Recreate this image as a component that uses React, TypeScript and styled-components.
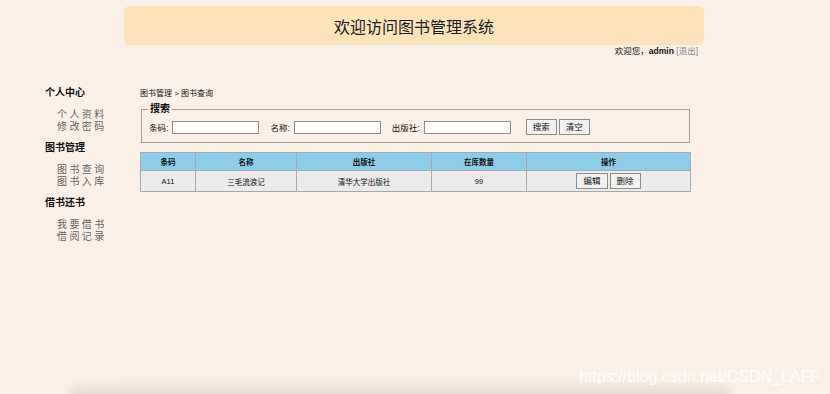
import React from "react";
import styled, { createGlobalStyle } from "styled-components";

const GlobalStyle = createGlobalStyle`
  html, body {
    margin: 0;
    padding: 0;
    background: #faf0e7;
    font-family: "Liberation Sans", "Noto Sans CJK SC", sans-serif;
    color: #111;
  }
`;

const menus = [
  { title: "个人中心", items: ["个人资料", "修改密码"] },
  { title: "图书管理", items: ["图书查询", "图书入库"] },
  { title: "借书还书", items: ["我要借书", "借阅记录"] },
];

const books = [{ code: "A11", name: "三毛流浪记", press: "清华大学出版社", stock: 99 }];

const App = () => {
  return (
    <>
      <GlobalStyle />
      <SPage>
        <SHeader>
          <SBanner>欢迎访问图书管理系统</SBanner>
          <SUser>
            欢迎您，<b>admin</b> <SLogout>[退出]</SLogout>
          </SUser>
        </SHeader>
        <SBody>
          <SSide>
            {menus.map((m) => (
              <SMenu key={m.title}>
                <SMenuTitle>{m.title}</SMenuTitle>
                <SSubList>
                  {m.items.map((it) => (
                    <SSubItem key={it}>{it}</SSubItem>
                  ))}
                </SSubList>
              </SMenu>
            ))}
          </SSide>
          <SMain>
            <SCrumb>图书管理 &gt; 图书查询</SCrumb>
            <SFieldset>
              <SLegend>搜索</SLegend>
              <SField>
                条码:<SInput />
              </SField>
              <SField>
                名称:<SInput />
              </SField>
              <SField>
                出版社:<SInput />
              </SField>
              <SButtons>
                <SButton>搜索</SButton>
                <SButton>清空</SButton>
              </SButtons>
            </SFieldset>
            <STable>
              <thead>
                <tr>
                  <STh $w={55}>条码</STh>
                  <STh $w={101}>名称</STh>
                  <STh $w={135}>出版社</STh>
                  <STh $w={95}>在库数量</STh>
                  <STh>操作</STh>
                </tr>
              </thead>
              <tbody>
                {books.map((b) => (
                  <tr key={b.code}>
                    <STd>{b.code}</STd>
                    <STd>{b.name}</STd>
                    <STd>{b.press}</STd>
                    <STd>{b.stock}</STd>
                    <STd>
                      <SOps>
                        <SButton>编辑</SButton>
                        <SButton>删除</SButton>
                      </SOps>
                    </STd>
                  </tr>
                ))}
              </tbody>
            </STable>
          </SMain>
        </SBody>
        <SShadow />
        <SMark>https://blog.csdn.net/CSDN_LAFF</SMark>
      </SPage>
    </>
  );
};

const SPage = styled.div`
  position: relative;
  width: 830px;
  height: 394px;
  overflow: hidden;
`;
const SHeader = styled.header`
  width: 580px;
  margin: 0 0 0 124px;
  padding-top: 6px;
`;
const SBanner = styled.div`
  height: 39px;
  background: #fde3b8;
  border-radius: 6px;
  display: flex;
  align-items: center;
  justify-content: center;
  font-size: 16px;
  color: #1a1a1a;
`;
const SUser = styled.div`
  text-align: right;
  font-size: 8.5px;
  padding-right: 6px;
  margin-top: 1px;
  line-height: 10px;
  b {
    font-weight: bold;
  }
`;
const SLogout = styled.span`
  color: #8a8a8a;
`;
const SBody = styled.div`
  display: flex;
  margin-top: 31px;
`;
const SSide = styled.nav`
  width: 95px;
  padding-left: 45px;
  flex-shrink: 0;
`;
const SMenu = styled.div`
  margin-bottom: 9px;
`;
const SMenuTitle = styled.div`
  font-size: 10px;
  font-weight: bold;
  line-height: 12px;
  margin-bottom: 10px;
`;
const SSubList = styled.div`
  padding-left: 12px;
`;
const SSubItem = styled.div`
  font-size: 10px;
  line-height: 12px;
  letter-spacing: 2.4px;
  color: #666;
`;
const SMain = styled.main`
  width: 550px;
  padding-top: 2px;
`;
const SCrumb = styled.div`
  font-size: 8px;
  line-height: 10px;
`;
const SFieldset = styled.fieldset`
  margin: 5px 0 0 1px;
  width: 549px;
  box-sizing: border-box;
  border: 1px solid #a6a09c;
  padding: 5px 0 7px 7px;
  display: flex;
  align-items: center;
`;
const SLegend = styled.legend`
  font-size: 10px;
  font-weight: bold;
  padding: 0 2px;
  margin-left: -1px;
  line-height: 10px;
`;
const SField = styled.label`
  display: flex;
  align-items: center;
  font-size: 8.5px;
  margin-right: 11px;
`;
const SInput = styled.input`
  width: 87px;
  height: 13px;
  box-sizing: border-box;
  margin-left: 4px;
  border: 1px solid #8f8f8f;
  background: #fff;
  padding: 0;
`;
const SButtons = styled.div`
  display: flex;
  gap: 2px;
  margin-left: 4px;
`;
const SButton = styled.button`
  height: 16px;
  padding: 0 6px;
  font-size: 8.5px;
  font-family: inherit;
  background: #f1f1f1;
  border: 1px solid #8e8e8e;
  color: #111;
  line-height: 1;
`;
const STable = styled.table`
  margin-top: 9px;
  width: 551px;
  border-collapse: collapse;
  font-size: 7.5px;
`;
const STh = styled.th<{ $w?: number }>`
  width: ${(p) => (p.$w ? `${p.$w}px` : "auto")};
  height: 18px;
  box-sizing: border-box;
  background: #8ccde8;
  border: 1px solid #a9a9a9;
  font-weight: bold;
  padding: 0;
`;
const STd = styled.td`
  height: 21px;
  box-sizing: border-box;
  background: #ebebeb;
  border: 1px solid #a9a9a9;
  text-align: center;
  padding: 0;
`;
const SOps = styled.div`
  display: flex;
  justify-content: center;
  gap: 2px;
`;
const SShadow = styled.div`
  position: absolute;
  left: 70px;
  right: 100px;
  bottom: -6px;
  height: 22px;
  border-radius: 50% 50% 0 0;
  background: linear-gradient(to bottom, rgba(0, 0, 0, 0), rgba(90, 70, 50, 0.16));
  filter: blur(4px);
`;
const SMark = styled.div`
  position: absolute;
  right: 10px;
  bottom: 8px;
  font-size: 16px;
  color: rgba(255, 255, 255, 0.85);
  font-family: "Liberation Sans", sans-serif;
`;

export default App;
